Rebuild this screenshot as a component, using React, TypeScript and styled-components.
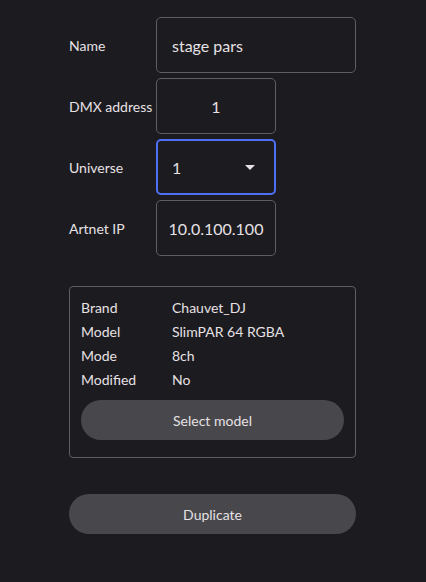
import React from "react";
import styled, { createGlobalStyle } from "styled-components";

const Global = createGlobalStyle`
  html, body { margin: 0; padding: 0; background: #1c1b1f; }
  body { font-family: "Lato", "Noto Sans", sans-serif; color: #e6e1e5; }
  * { box-sizing: border-box; }
`;

const Page = styled.div`
  width: 426px;
  min-height: 582px;
  background: #1c1b1f;
  padding: 17px 0 0 69px;
`;

const Column = styled.div`
  width: 287px;
  display: flex;
  flex-direction: column;
`;

const Fields = styled.div`
  display: flex;
  flex-direction: column;
  gap: 5px;
`;

const Row = styled.div`
  display: grid;
  grid-template-columns: 87px auto;
  align-items: center;
`;

const Label = styled.div`
  font-size: 14px;
  color: #e6e1e5;
`;

const Field = styled.div<{ $w: number; $center?: boolean; $focus?: boolean }>`
  width: ${(p) => p.$w}px;
  height: 56px;
  border: ${(p) => (p.$focus ? "2px solid #4d6ef5" : "1px solid #5f5e63")};
  border-radius: 5px;
  display: flex;
  align-items: center;
  justify-content: ${(p) => (p.$center ? "center" : "space-between")};
  padding: 0 ${(p) => (p.$focus ? 14 : 15)}px;
  font-size: 16px;
  color: #e6e1e5;
  white-space: nowrap;
`;

const Arrow = styled.span`
  width: 0;
  height: 0;
  border-left: 5px solid transparent;
  border-right: 5px solid transparent;
  border-top: 5px solid #e6e1e5;
  margin-right: 5px;
`;

const Card = styled.div`
  margin-top: 30px;
  border: 1px solid #5f5e63;
  border-radius: 4px;
  padding: 8px 11px 17px 11px;
  display: flex;
  flex-direction: column;
`;

const InfoRow = styled.div`
  display: grid;
  grid-template-columns: 91px auto;
  height: 24px;
  align-items: center;
  font-size: 14px;
`;

const Button = styled.button<{ $top: number }>`
  margin-top: ${(p) => p.$top}px;
  height: 40px;
  width: 100%;
  border: none;
  border-radius: 20px;
  background: #48474b;
  color: #e6e1e5;
  font-family: "Lato", "Noto Sans", sans-serif;
  font-size: 14px;
  cursor: pointer;
`;

const info: [string, string][] = [
  ["Brand", "Chauvet_DJ"],
  ["Model", "SlimPAR 64 RGBA"],
  ["Mode", "8ch"],
  ["Modified", "No"],
];

export default function App() {
  return (
    <Page>
      <Global />
      <Column>
        <Fields>
          <Row>
            <Label>Name</Label>
            <Field $w={200}>stage pars</Field>
          </Row>
          <Row>
            <Label>DMX address</Label>
            <Field $w={120} $center>1</Field>
          </Row>
          <Row>
            <Label>Universe</Label>
            <Field $w={120} $focus>
              <span>1</span>
              <Arrow />
            </Field>
          </Row>
          <Row>
            <Label>Artnet IP</Label>
            <Field $w={120} $center>10.0.100.100</Field>
          </Row>
        </Fields>
        <Card>
          {info.map(([k, v]) => (
            <InfoRow key={k}>
              <span>{k}</span>
              <span>{v}</span>
            </InfoRow>
          ))}
          <Button $top={9}>Select model</Button>
        </Card>
        <Button $top={36}>Duplicate</Button>
      </Column>
    </Page>
  );
}
